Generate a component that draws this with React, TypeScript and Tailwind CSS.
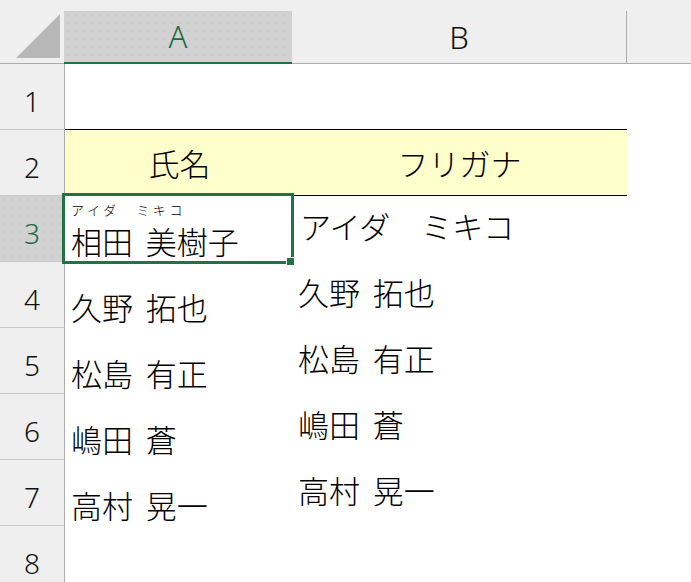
const people = [
  { row: 4, name: "久野 拓也", kana: "久野 拓也" },
  { row: 5, name: "松島 有正", kana: "松島 有正" },
  { row: 6, name: "嶋田 蒼", kana: "嶋田 蒼" },
  { row: 7, name: "高村 晃一", kana: "高村 晃一" },
]

const dots =
  "bg-[image:radial-gradient(#c2c2c2_0.6px,transparent_0.8px)] bg-[length:8px_8px]"

function RowHead({ n, active = false }: { n: number; active?: boolean }) {
  return (
    <div
      className={`w-[65px] h-full shrink-0 flex items-center justify-center pt-[8px] border-r border-b border-r-[#ababab] border-b-[#c8c8c8] font-['Noto_Sans',sans-serif] font-light text-[28px] leading-none ${
        active ? `bg-[#d2d2d2] text-[#1e6b41] ${dots}` : "bg-[#efefef] text-[#111]"
      }`}
    >
      {n}
    </div>
  )
}

export default function App() {
  return (
    <div className="w-[691px] h-[582px] overflow-hidden bg-white text-black font-['Noto_Sans_CJK_JP',sans-serif] font-light">
      {/* column headers */}
      <div className="flex items-end h-[64px] bg-[#efefef] border-b border-[#ababab]">
        <div className="w-[64px] h-full flex items-end justify-end pr-[3px] pb-[4px]">
          <svg width="46" height="46" viewBox="0 0 46 46">
            <polygon points="1,45 45,45 45,1" fill="#b7b7b7" />
          </svg>
        </div>
        <div
          className={`w-[228px] h-[53px] -mb-px flex items-center justify-center bg-[#d2d2d2] border-b-2 border-[#217346] font-['Noto_Sans',sans-serif] text-[31px] leading-none text-[#1e6b41] ${dots}`}
        >
          A
        </div>
        <div className="w-[335px] h-[52px] flex items-center justify-center border-r border-[#ababab] font-['Noto_Sans',sans-serif] text-[31px] leading-none text-[#111]">
          B
        </div>
        <div className="flex-1" />
      </div>

      {/* row 1 */}
      <div className="flex h-[66px]">
        <RowHead n={1} />
        <div className="w-[227px] border-b border-black" />
        <div className="w-[335px] border-b border-black" />
      </div>

      {/* row 2 : header */}
      <div className="flex h-[66px] text-[31px] leading-none">
        <RowHead n={2} />
        <div className="w-[227px] flex items-center justify-center pl-[2px] bg-[#ffffcc] border-b border-black">
          氏名
        </div>
        <div className="w-[335px] flex items-center justify-center bg-[#ffffcc] border-b border-black">
          フリガナ
        </div>
      </div>

      {/* row 3 : selected */}
      <div className="flex h-[66px] text-[31px] leading-none [word-spacing:6px]">
        <RowHead n={3} active />
        <div className="relative w-[227px] flex flex-col justify-end pl-[6px] pb-[6px]">
          <span className="text-[13px] leading-none tracking-[3.6px] mb-[9px] [word-spacing:0px]">アイダ　ミキコ</span>
          <span>相田 美樹子</span>
          <div className="absolute -left-[3px] -top-[3px] -right-[2px] -bottom-[2px] border-[3px] border-[#217346]" />
          <div className="absolute -right-[3px] -bottom-[4px] w-[9px] h-[9px] bg-[#217346] border border-white" />
        </div>
        <div className="w-[335px] flex items-center pl-[8px] pb-[8px]">アイダ　ミキコ</div>
      </div>

      {people.map((p) => (
        <div key={p.row} className="flex h-[66px] text-[31px] leading-none [word-spacing:6px]">
          <RowHead n={p.row} />
          <div className="w-[227px] flex items-end pl-[6px] pb-[6px]">{p.name}</div>
          <div className="w-[335px] flex items-center pl-[6px] pb-[8px]">{p.kana}</div>
        </div>
      ))}

      <div className="flex h-[66px]">
        <RowHead n={8} />
      </div>
    </div>
  )
}
